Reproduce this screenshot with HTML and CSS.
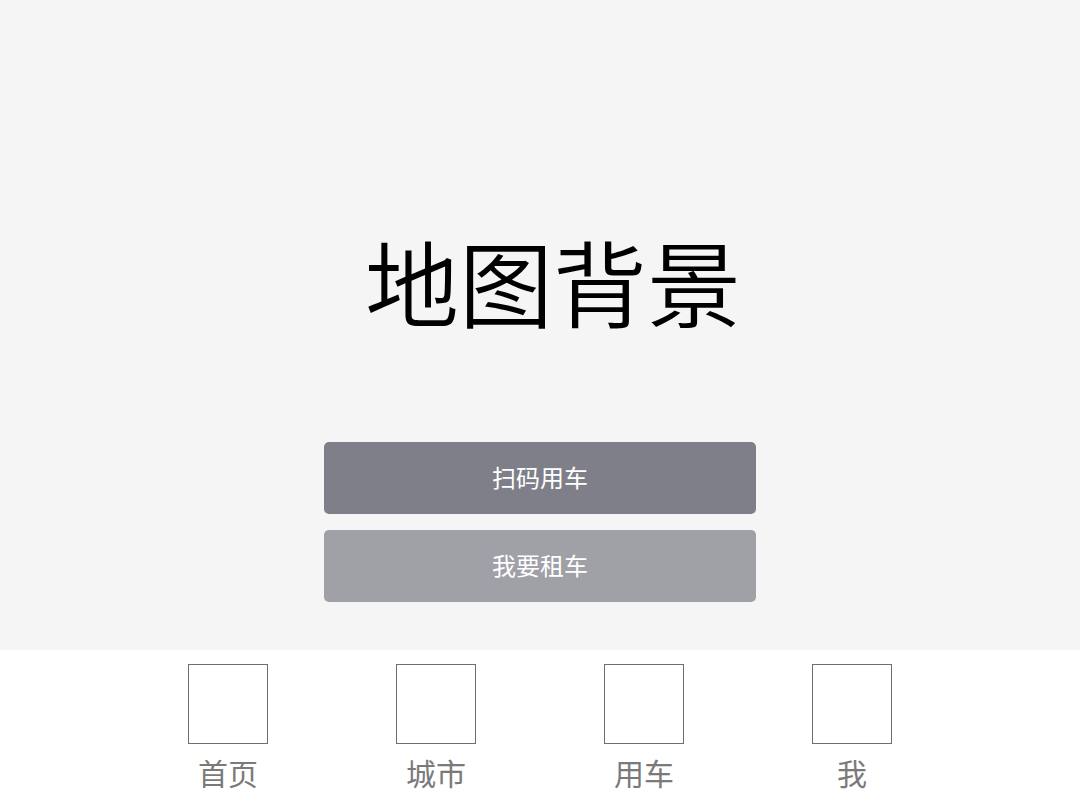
FILE: index.html
```html
<!DOCTYPE html>
<html lang="zh-CN">
<head>
<meta charset="utf-8">
<link rel="stylesheet" href="styles.css">
</head>
<body>
<div class="app">
  <main class="map">
    <h1 class="map-title">地图背景</h1>
    <div class="actions">
      <button class="btn btn-primary">扫码用车</button>
      <button class="btn btn-secondary">我要租车</button>
    </div>
  </main>
  <nav class="tabbar">
    <div class="tab"><div class="tab-icon"></div><span class="tab-label">首页</span></div>
    <div class="tab"><div class="tab-icon"></div><span class="tab-label">城市</span></div>
    <div class="tab"><div class="tab-icon"></div><span class="tab-label">用车</span></div>
    <div class="tab"><div class="tab-icon"></div><span class="tab-label">我</span></div>
  </nav>
</div>
</body>
</html>
```

FILE: styles.css
```css
html, body {
  margin: 0;
  padding: 0;
}
body {
  font-family: "Noto Sans CJK SC", "Noto Sans", sans-serif;
  background: #ffffff;
}
.app {
  width: 1080px;
  height: 800px;
  display: flex;
  flex-direction: column;
  overflow: hidden;
}
.map {
  height: 650px;
  background: #f5f5f5;
  display: flex;
  flex-direction: column;
  align-items: center;
}
.map-title {
  margin: 208px 0 0 0;
  font-size: 94px;
  font-weight: 350;
  line-height: 144px;
  color: #000;
  padding-left: 26px;
}
.actions {
  margin-top: 90px;
  display: flex;
  flex-direction: column;
  gap: 16px;
}
.btn {
  width: 432px;
  height: 72px;
  border: none;
  border-radius: 5px;
  color: #fff;
  font-family: inherit;
  font-size: 24px;
  padding: 0 0 4px 0;
}
.btn-primary { background: #7f7f89; }
.btn-secondary { background: #a0a0a7; }
.tabbar {
  flex: 1;
  background: #fff;
  display: flex;
  justify-content: center;
  padding-top: 14px;
}
.tab {
  width: 208px;
  display: flex;
  flex-direction: column;
  align-items: center;
}
.tab-icon {
  width: 78px;
  height: 78px;
  border: 1px solid #6e6e6e;
}
.tab-label {
  margin-top: 6px;
  font-size: 30px;
  line-height: 44px;
  color: #7a7a7a;
}
```
